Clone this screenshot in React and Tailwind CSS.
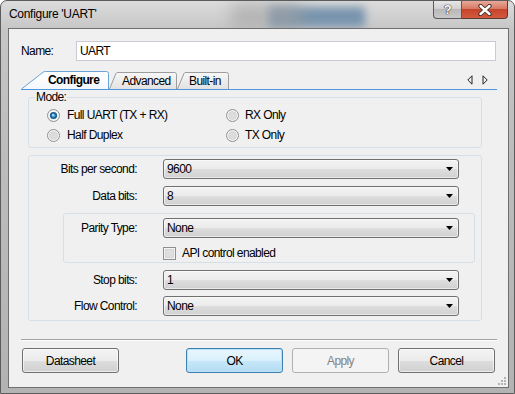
import React from 'react';

const comboBg = 'bg-[linear-gradient(#f3f3f3,#ebebeb_50%,#dedede_50%,#d0d0d0)]';

function DropArrow() {
  return (
    <svg width="7" height="4" viewBox="0 0 7 4">
      <path d="M0 0H7L3.5 4Z" fill="#000" />
    </svg>
  );
}

function Combo({ value }) {
  return (
    <div className={`flex h-[20px] w-[296px] items-center justify-between rounded-[3px] border border-[#707070] ${comboBg} pl-[3px] pr-[5px] shadow-[inset_0_0_0_1px_rgba(255,255,255,0.55)]`}>
      <span>{value}</span>
      <DropArrow />
    </div>
  );
}

function Radio({ checked }) {
  return (
    <svg width="13" height="13" viewBox="0 0 13 13" className="shrink-0">
      <circle cx="6.5" cy="6.5" r="6" fill="#f4f4f4" stroke="#8e8f8f" />
      {checked ? (
        <>
          <circle cx="6.5" cy="6.5" r="3.6" fill="#1c5a8e" />
          <circle cx="6.5" cy="6.5" r="2" fill="#4aa3df" />
          <circle cx="6" cy="6" r="0.9" fill="#bfe3f7" />
        </>
      ) : (
        <circle cx="6.5" cy="6.5" r="4" fill="#dcdcdc" stroke="#cfcfcf" strokeWidth="0.6" />
      )}
    </svg>
  );
}

function Checkbox() {
  return (
    <svg width="13" height="13" viewBox="0 0 13 13" className="shrink-0">
      <rect x="0.5" y="0.5" width="12" height="12" fill="#f4f4f4" stroke="#8e8f8f" />
      <rect x="2.5" y="2.5" width="8" height="8" fill="#dedede" stroke="#c9c9c9" strokeWidth="0.6" />
    </svg>
  );
}

function Button({ children, kind }) {
  if (kind === 'default') {
    return (
      <div className="flex h-[25px] w-[97px] items-center justify-center rounded-[3px] border border-[#3c7fb1] bg-[linear-gradient(#eaf6fd,#d9f0fc_50%,#c6e7f9_50%,#b6dcf2)] shadow-[inset_0_0_0_1px_#b9e1f7]">
        {children}
      </div>
    );
  }
  if (kind === 'disabled') {
    return (
      <div className="flex h-[25px] w-[97px] items-center justify-center rounded-[3px] border border-[#adb2b5] bg-[#f4f4f4] text-[#838383]">
        {children}
      </div>
    );
  }
  return (
    <div className={`flex h-[25px] w-[97px] items-center justify-center rounded-[3px] border border-[#707070] ${comboBg} shadow-[inset_0_0_0_1px_rgba(255,255,255,0.6)]`}>
      {children}
    </div>
  );
}

function Tab({ label, width, active, path, textLeft, className }) {
  return (
    <div
      className={`relative flex items-center ${active ? 'z-10 h-[18px] font-bold' : 'h-[17px]'} ${className || ''}`}
      style={{ width }}
    >
      <svg className="absolute inset-0 h-full w-full" viewBox={`0 0 ${width} ${active ? 18 : 17}`} preserveAspectRatio="none">
        <defs>
          <linearGradient id={`tab-${label}`} x1="0" y1="0" x2="0" y2="1">
            <stop offset="0" stopColor={active ? '#ffffff' : '#f7f7f7'} />
            <stop offset="1" stopColor={active ? '#f4f8fc' : '#e2e2e2'} />
          </linearGradient>
        </defs>
        <path d={path} fill={`url(#tab-${label})`} stroke={active ? '#6aa3d8' : '#9c9c9c'} />
      </svg>
      <span className="relative" style={{ marginLeft: textLeft }}>{label}</span>
    </div>
  );
}

function FieldRow({ label, labelWidth, children }) {
  return (
    <div className="flex h-[20px] items-center">
      <div className="text-right" style={{ width: labelWidth }}>{label}</div>
      <div className="ml-[26px]">{children}</div>
    </div>
  );
}

export default function App() {
  return (
    <div className="relative h-[394px] w-[515px] overflow-hidden rounded-t-[7px] border border-[#5c5c5c] bg-[linear-gradient(180deg,#dcdcdc,#c6c6c6_28px,#bdbdbd_140px,#b3b3b3)] font-['Liberation_Sans',Arial,sans-serif] text-[12px] tracking-[-0.6px] text-black">
      <div className="absolute left-[268px] top-[6px] h-[20px] w-[96px] bg-[#6f8eaa] opacity-90 blur-[4px]" />
      <div className="absolute left-[230px] top-[2px] h-[26px] w-[70px] bg-[#a3a3a3] opacity-60 blur-[8px]" />

      <div className="relative flex h-[27px] items-start justify-between">
        <div className="pl-[8px] pt-[6px] leading-[14px] tracking-[-0.3px]">Configure 'UART'</div>
        <div className="mr-[6px] flex">
          <div className="flex h-[18px] w-[29px] items-center justify-center rounded-bl-[4px] border border-t-0 border-[#5a5a5a] bg-[linear-gradient(#e6e6e6,#cfcfcf_50%,#b9b9b9_50%,#c9c9c9)] text-[13px] font-bold text-white [text-shadow:0_0_1px_#333,0_0_1px_#333,0_0_1px_#333]">
            ?
          </div>
          <div className="flex h-[18px] w-[46px] items-center justify-center rounded-br-[4px] border border-l-0 border-t-0 border-[#5a3a33] bg-[linear-gradient(#e9a898,#d77a64_45%,#c5442c_50%,#d35a3f)]">
            <svg width="14" height="12" viewBox="0 0 14 12">
              <path d="M2.5 2L11.5 10M11.5 2L2.5 10" stroke="#3b2a26" strokeWidth="4.2" strokeLinecap="round" />
              <path d="M2.5 2L11.5 10M11.5 2L2.5 10" stroke="#ffffff" strokeWidth="2.4" strokeLinecap="round" />
            </svg>
          </div>
        </div>
      </div>

      <div className="relative ml-[7px] h-[360px] w-[501px] border border-[#6f6f6f] bg-[#f0f0f0]">
        <div className="mt-[12px] flex items-center">
          <div className="w-[67px] pl-[12px]">Name:</div>
          <div className="flex h-[20px] w-[420px] items-center border border-[#c9cdd3] bg-white pl-[3px]">UART</div>
        </div>

        <div className="ml-[12px] mt-[10px] flex h-[19px] w-[476px] items-end border-b border-[#4f97dc]">
          <Tab label="Configure" width={88} active textLeft={27} path="M0.5 18 L21 2 Q22.3 0.5 24.5 0.5 H85.5 Q87.5 0.5 87.5 2.5 V18" />
          <Tab label="Advanced" width={69} textLeft={14} className="-ml-[1px]" path="M1.5 17 L7.8 1.8 Q8.4 0.5 10 0.5 H66.5 Q68.5 0.5 68.5 2.5 V17" />
          <Tab label="Built-in" width={53} textLeft={13} className="-ml-[1px]" path="M1.5 17 L7.8 1.8 Q8.4 0.5 10 0.5 H50.5 Q52.5 0.5 52.5 2.5 V17" />
          <div className="mb-[4px] ml-auto mr-[9px] flex gap-[9px]">
            <svg width="6" height="10" viewBox="0 0 6 10">
              <path d="M5 0.8 L0.8 5 L5 9.2 Z" fill="none" stroke="#222" />
            </svg>
            <svg width="6" height="10" viewBox="0 0 6 10">
              <path d="M1 0.8 L5.2 5 L1 9.2 Z" fill="none" stroke="#222" />
            </svg>
          </div>
        </div>

        <fieldset className="ml-[19px] mt-[1px] w-[454px] rounded-[3px] border border-[#d5dfe5] pb-[2px]">
          <legend className="ml-[6px] px-[1px] leading-[13px]">Mode:</legend>
          <div className="ml-[18px] grid grid-cols-[179px_1fr] pt-[1px]">
            <div className="flex h-[20px] items-center gap-[7px]">
              <Radio checked />
              <span>Full UART (TX + RX)</span>
            </div>
            <div className="flex h-[20px] items-center gap-[6px]">
              <Radio />
              <span>RX Only</span>
            </div>
            <div className="flex h-[20px] items-center gap-[7px]">
              <Radio />
              <span>Half Duplex</span>
            </div>
            <div className="flex h-[20px] items-center gap-[6px]">
              <Radio />
              <span>TX Only</span>
            </div>
          </div>
        </fieldset>

        <div className="ml-[19px] mt-[7px] flex w-[454px] flex-col gap-[7px] rounded-[3px] border border-[#d5dfe5] pb-[4px] pt-[3px]">
          <FieldRow label="Bits per second:" labelWidth={108}>
            <Combo value="9600" />
          </FieldRow>
          <FieldRow label="Data bits:" labelWidth={108}>
            <Combo value="8" />
          </FieldRow>
          <div className="ml-[34px] w-[412px] rounded-[3px] border border-[#d5dfe5] pb-[2px] pt-[4px]">
            <FieldRow label="Parity Type:" labelWidth={73}>
              <Combo value="None" />
            </FieldRow>
            <div className="ml-[99px] mt-[9px] flex h-[13px] items-center gap-[6px] leading-[13px]">
              <Checkbox />
              <span>API control enabled</span>
            </div>
          </div>
          <FieldRow label="Stop bits:" labelWidth={108}>
            <Combo value="1" />
          </FieldRow>
          <div className="-mt-[1px]">
            <FieldRow label="Flow Control:" labelWidth={108}>
              <Combo value="None" />
            </FieldRow>
          </div>
        </div>

        <div className="ml-[12px] mt-[18px] w-[476px] border-t border-[#a0a0a0] shadow-[0_1px_0_#ffffff]" />

        <div className="ml-[13px] mt-[8px] flex w-[473px]">
          <Button>Datasheet</Button>
          <div className="ml-auto flex gap-[9px]">
            <Button kind="default">OK</Button>
            <Button kind="disabled">Apply</Button>
            <Button>Cancel</Button>
          </div>
        </div>

        <svg className="absolute bottom-[2px] right-[2px]" width="8" height="8" viewBox="0 0 8 8">
          <rect x="6" y="0" width="2" height="2" fill="#b4b4b4" />
          <rect x="3" y="3" width="2" height="2" fill="#b4b4b4" />
          <rect x="6" y="3" width="2" height="2" fill="#b4b4b4" />
          <rect x="0" y="6" width="2" height="2" fill="#b4b4b4" />
          <rect x="3" y="6" width="2" height="2" fill="#b4b4b4" />
          <rect x="6" y="6" width="2" height="2" fill="#b4b4b4" />
        </svg>
      </div>
    </div>
  );
}
